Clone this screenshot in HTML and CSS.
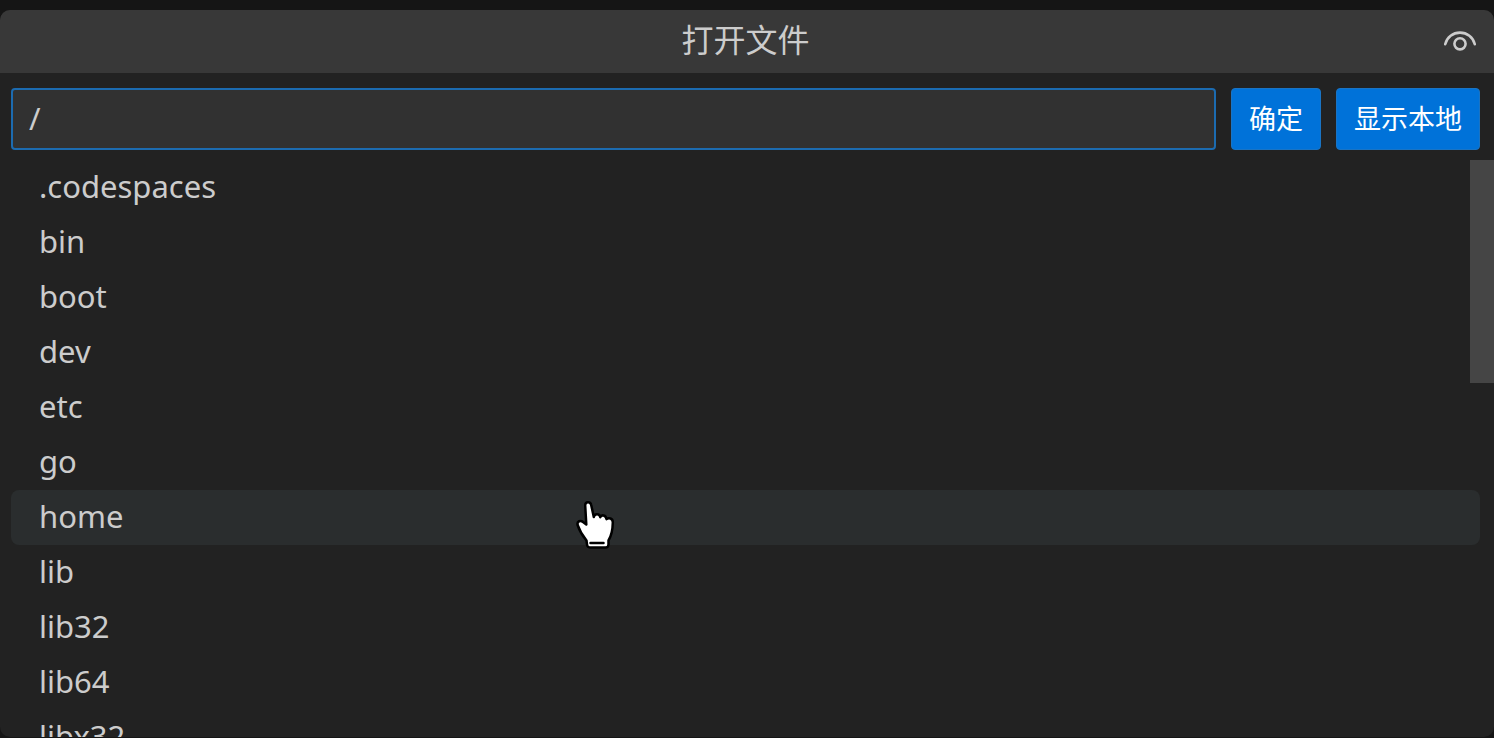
FILE: index.html
```html
<!DOCTYPE html>
<html lang="zh-CN">
<head>
<meta charset="utf-8">
<meta name="viewport" content="width=device-width, initial-scale=1">
<title>打开文件</title>
<link rel="stylesheet" href="styles.css">
</head>
<body>
<main class="dialog">
  <header class="titlebar">
    <h1 class="title">打开文件</h1>
    <button class="toggle" type="button" aria-label="显示隐藏文件">
      <svg class="eye" viewBox="0 0 34 24" aria-hidden="true">
        <path d="M2.2 14.2C4 7 10 2.6 17 2.6S30 7 31.8 14.2"/>
        <circle cx="17" cy="13.8" r="5.6"/>
      </svg>
    </button>
  </header>
  <form class="path-form">
    <input class="path" type="text" value="/" aria-label="路径">
    <button class="button" type="button">确定</button>
    <button class="button" type="button">显示本地</button>
  </form>
  <div class="files">
    <ul class="list">
      <li class="item">.codespaces</li>
      <li class="item">bin</li>
      <li class="item">boot</li>
      <li class="item">dev</li>
      <li class="item">etc</li>
      <li class="item">go</li>
      <li class="item active">home</li>
      <li class="item">lib</li>
      <li class="item">lib32</li>
      <li class="item">lib64</li>
      <li class="item">libx32</li>
    </ul>
    <div class="thumb"></div>
  </div>
</main>
<svg class="pointer" viewBox="0 0 40 50" aria-hidden="true">
  <path class="hand" d="M10.300 24.500L9.200 5.500C9 1.200 14.600 1 15.200 5L17.800 17C18.400 13.200 23.800 13.200 24.200 17.200C25.400 14.200 30 15 30.500 19.200C32.600 17.200 37 18.200 36.800 22.500C36.700 31 35.800 35 32.500 40.500V44.500Q32.300 47.500 29.500 47.500H14Q11.300 47.500 11 44.500L10.500 40.500C6.800 36 3.600 31 1.600 25C0.800 21.200 4.600 19.800 7 22Z"/>
  <path class="cuff" d="M14.500 43H27.500"/>
</svg>
</body>
</html>
```
FILE: styles.css
```css
* {
  box-sizing: border-box;
}

body {
  display: flex;
  height: 100vh;
  margin: 0;
  padding: 10px 0 1px;
  overflow: hidden;
  background: #151515;
  color: #ccc;
  font-family: "Noto Sans", "Noto Sans CJK SC", sans-serif;
  font-size: 31px;
}

.dialog {
  display: flex;
  flex: 1;
  flex-direction: column;
  min-width: 0;
  overflow: hidden;
  border-radius: 10px;
  background: #222;
}

.titlebar {
  display: grid;
  grid-template-columns: 1fr auto 1fr;
  align-items: center;
  flex: none;
  padding: 0 17px 0 14px;
  background: #383838;
}

.title {
  grid-column: 2;
  margin: 0;
  padding-bottom: 7px;
  font-family: "Noto Sans CJK SC", sans-serif;
  font-size: 32px;
  font-weight: 400;
  line-height: 56px;
}

.toggle {
  display: flex;
  justify-self: end;
  padding: 0;
  border: 0;
  background: none;
  color: inherit;
}

.eye {
  width: 34px;
  height: 24px;
  fill: none;
  stroke: currentColor;
  stroke-width: 2.600;
  stroke-linecap: round;
}

.path-form {
  display: flex;
  flex: none;
  gap: 15px;
  padding: 15px 14px 10px 11px;
}

.path {
  flex: 1;
  min-width: 0;
  height: 62px;
  padding: 0 16px 2px;
  border: 2px solid #1c6bb0;
  border-radius: 4px;
  outline: 0;
  background: #313131;
  color: inherit;
  font: inherit;
}

.button {
  height: 62px;
  padding: 0 17px 4px;
  border: 1px solid #1a74c4;
  border-radius: 4px;
  background: #0072d9;
  color: #fff;
  font-family: "Noto Sans CJK SC", sans-serif;
  font-size: 27px;
}

.files {
  position: relative;
  flex: 1;
  min-height: 0;
  overflow: hidden;
}

.list {
  margin: 0;
  padding: 0 14px 0 11px;
  list-style: none;
}

.item {
  padding: 0 28px 2px;
  border-radius: 8px;
  line-height: 53px;
}

.active {
  background: #2a2d2e;
}

.thumb {
  position: absolute;
  top: 0;
  right: 0;
  width: 24px;
  height: 223px;
  background: #454545;
}

.pointer {
  position: absolute;
  top: 500px;
  left: 576px;
  width: 40px;
  height: 50px;
}

.hand {
  fill: #fff;
  stroke: #000;
  stroke-width: 2.500;
  stroke-linejoin: round;
}

.cuff {
  stroke: #000;
  stroke-width: 2.500;
  stroke-linecap: round;
}
```
